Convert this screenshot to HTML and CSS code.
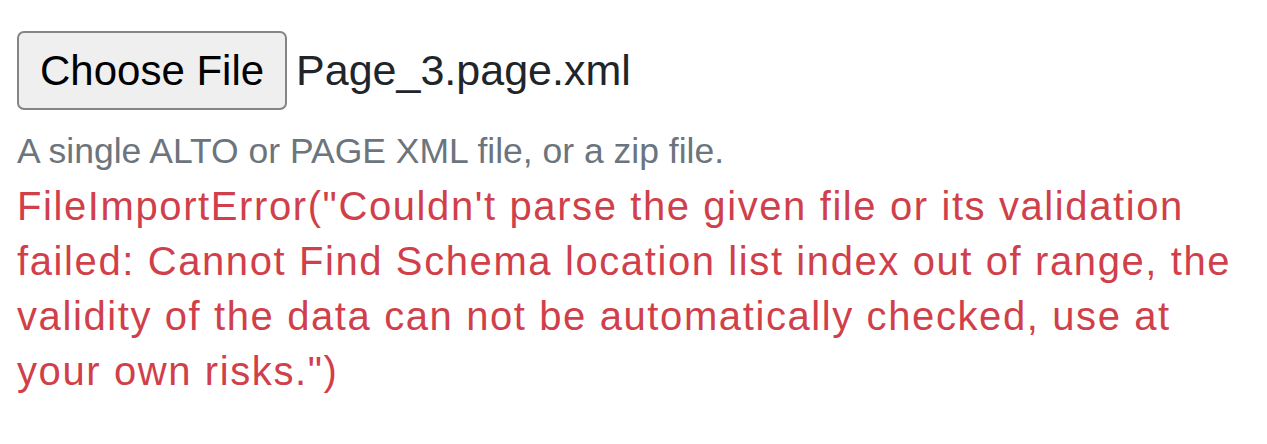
FILE: index.html
```html
<!DOCTYPE html>
<html lang="en">
<head>
  <meta charset="UTF-8" />
  <meta name="viewport" content="width=device-width, initial-scale=1.0"/>
  <title>Import File</title>
  <link rel="stylesheet" href="styles.css">
</head>
<body>
  <div class="form-group">
    <div class="file-input">
      <button class="file-btn" type="button">Choose File</button>
      <span class="file-name">Page_3.page.xml</span>
    </div>
    <p class="form-text">A single ALTO or PAGE XML file, or a zip file.</p>
    <p class="invalid-feedback">FileImportError("Couldn't parse the given file or its validation failed: Cannot Find Schema location list index out of range, the validity of the data can not be automatically checked, use at your own risks.")</p>
  </div>
</body>
</html>
```

FILE: styles.css
```css
body {
  margin: 0;
  padding: 0;
  font-family: "Liberation Sans", Arial, sans-serif;
  background-color: #fff;
  color: #212529;
}

.form-group {
  padding: 31px 0 0 17px;
  width: 1223px;
}

.file-input {
  display: flex;
  align-items: center;
  gap: 9px;
}

.file-btn {
  box-sizing: border-box;
  height: 79px;
  padding: 0 21px;
  font-family: inherit;
  font-size: 42px;
  color: #000;
  background-color: #efefef;
  border: 2px solid #858585;
  border-radius: 7px;
}

.file-name {
  font-size: 43px;
  color: #212529;
}

.form-text {
  margin: 15px 0 0 0;
  font-size: 35.5px;
  line-height: 1.5;
  color: #6c757d;
}

.invalid-feedback {
  margin: 1px 0 0 0;
  font-size: 40px;
  letter-spacing: 1.6px;
  line-height: 55px;
  color: #d03f4a;
}
```
